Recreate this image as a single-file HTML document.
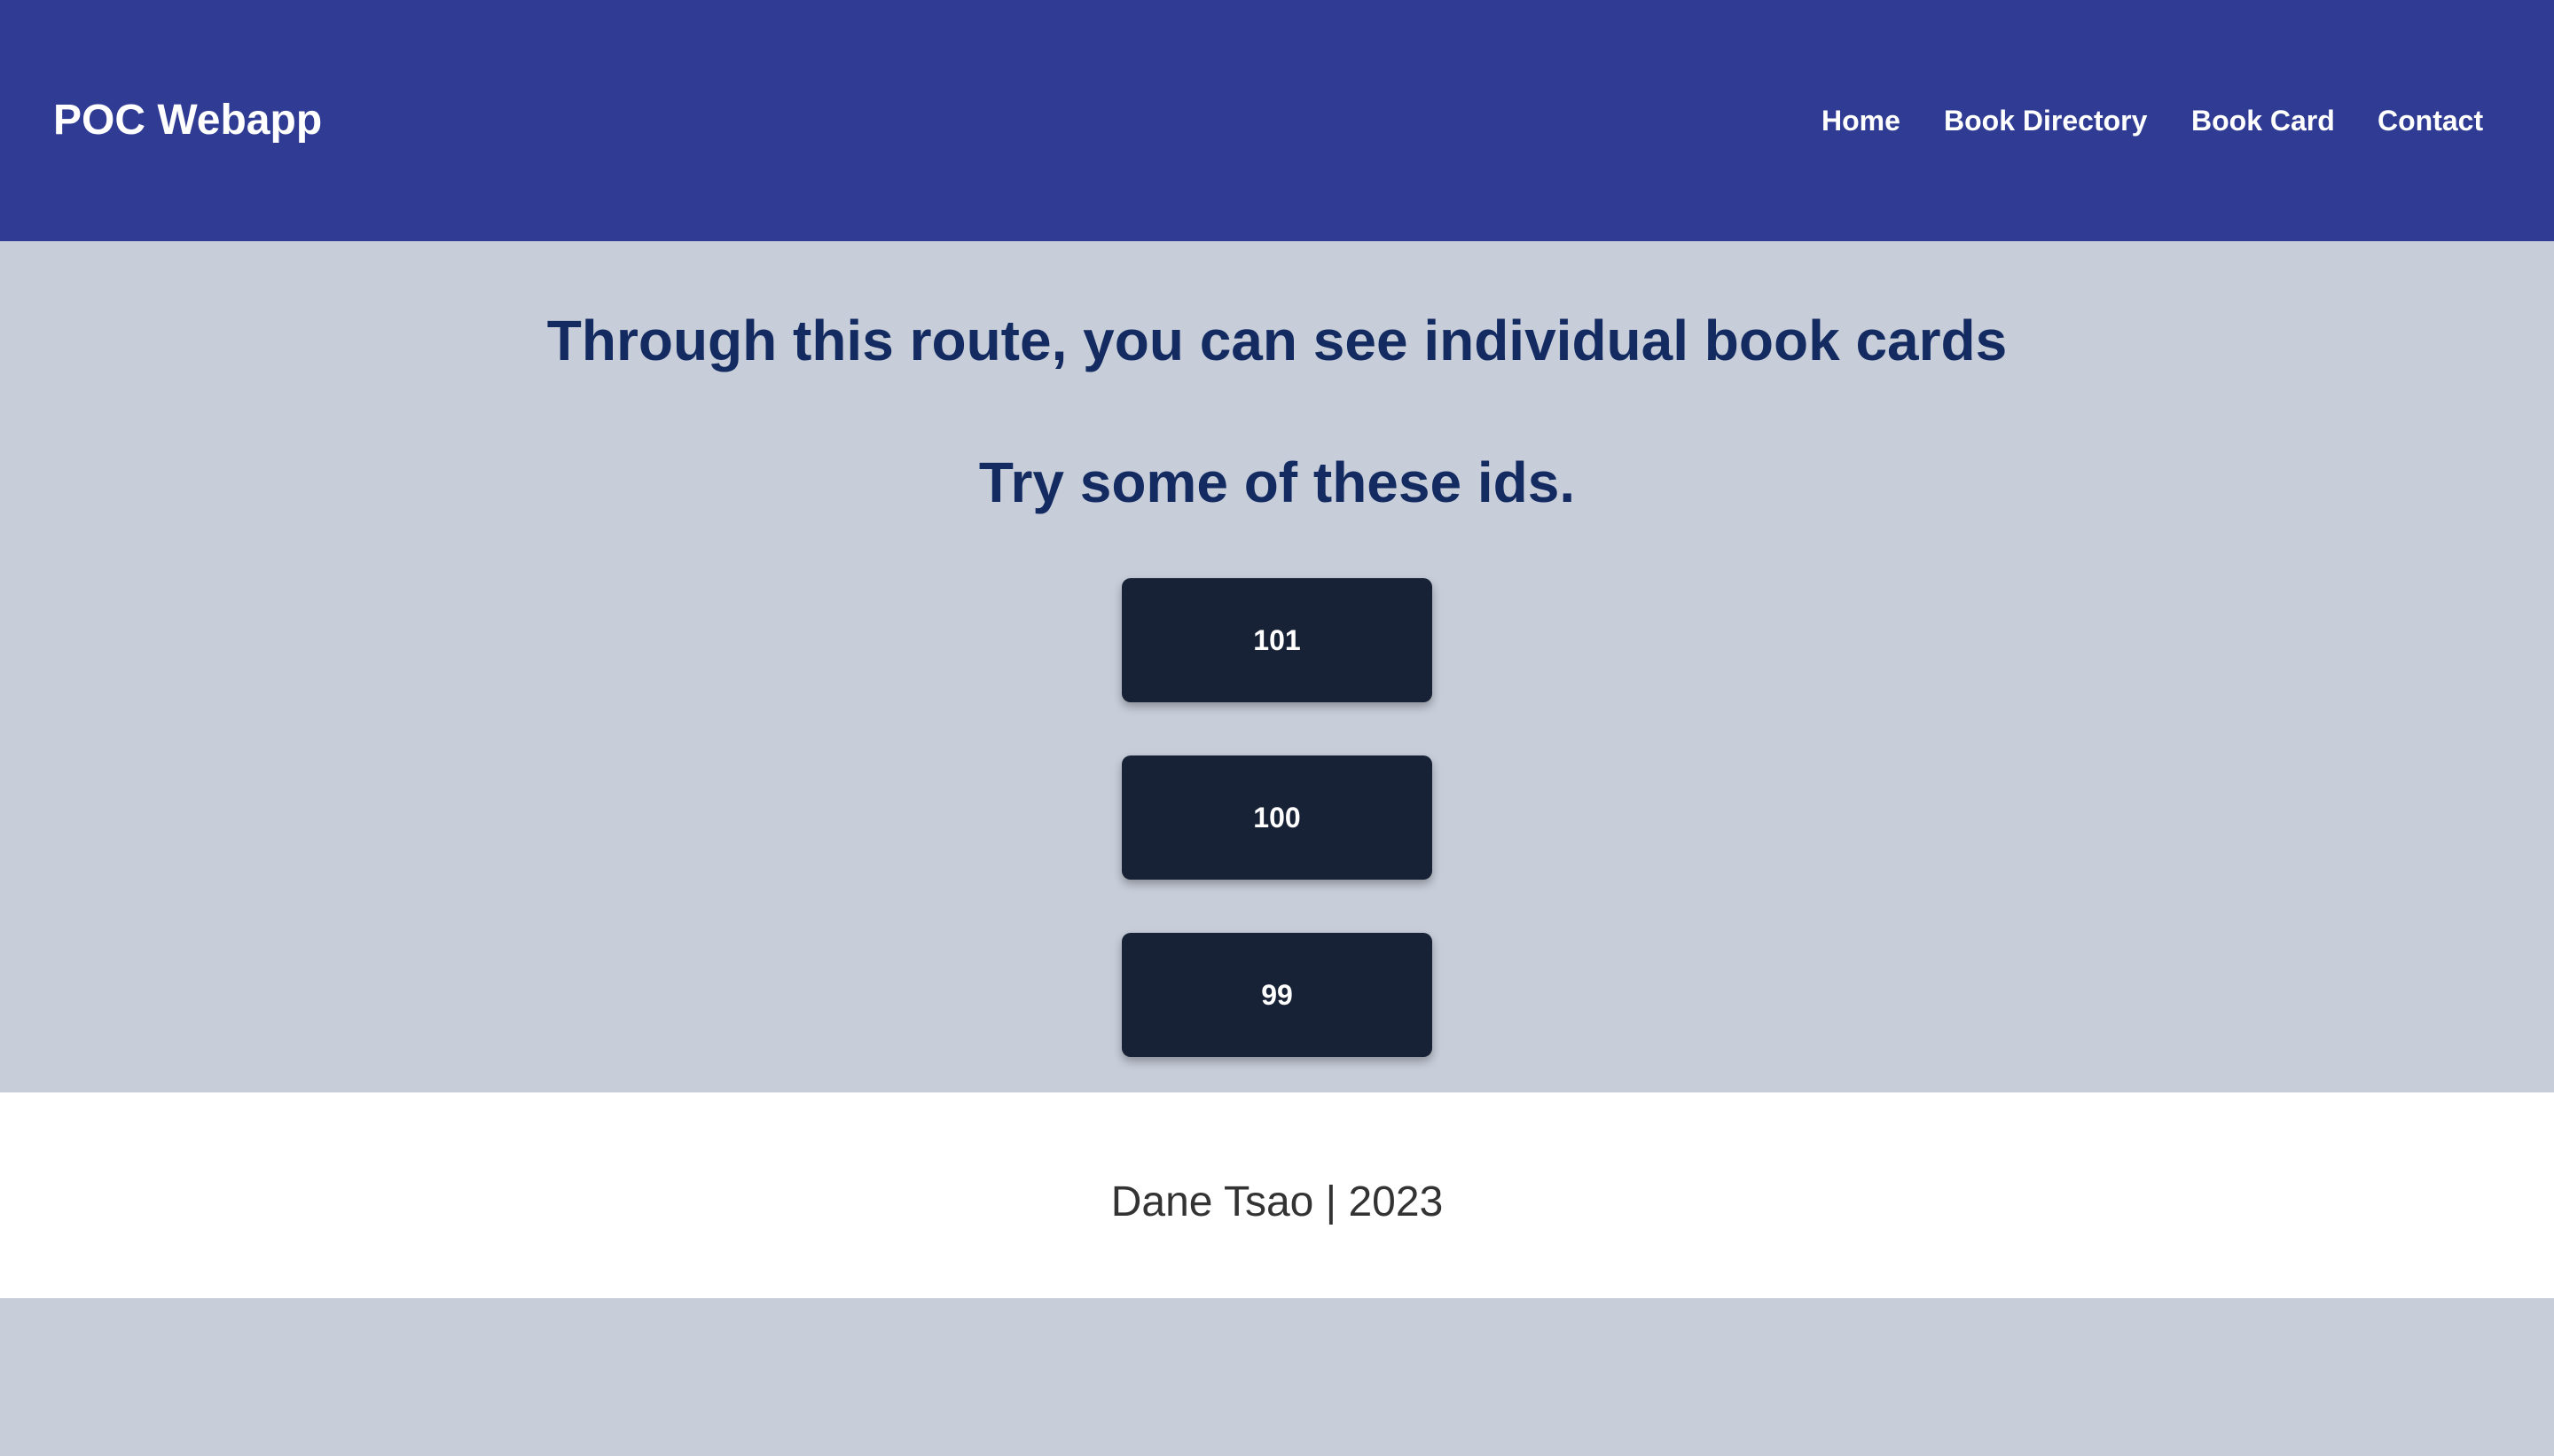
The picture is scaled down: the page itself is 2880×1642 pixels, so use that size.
<!DOCTYPE html>
<html><head><meta charset="utf-8"><style>
html,body{margin:0;padding:0;width:2880px;height:1642px;background:#c7cdd9;font-family:"Liberation Sans",Arial,sans-serif;overflow:hidden}
.hdr{position:absolute;left:0;top:0;width:2880px;height:272px;background:#303c94}
.logo{position:absolute;left:60px;top:106px;font-size:48px;font-weight:bold;color:#fff;line-height:60px}
.nav{position:absolute;top:116px;font-size:32px;font-weight:bold;color:#fff;line-height:40px;white-space:nowrap}
.h{position:absolute;left:0;width:2880px;text-align:center;font-weight:bold;color:#132b61;font-size:64px;line-height:80px}
.btn{position:absolute;left:1265px;width:350px;height:140px;background:#182236;border-radius:10px;box-shadow:0 5px 10px rgba(0,0,0,.3);color:#fff;font-weight:bold;font-size:32px;line-height:140px;text-align:center}
.ft{position:absolute;left:0;top:1232px;width:2880px;height:232px;background:#fff;text-align:center;font-size:48px;color:#333}
.ft span{position:absolute;left:0;width:2880px;top:98px;line-height:52px}
</style></head><body>
<div class="hdr">
<div class="logo">POC Webapp</div>
<div class="nav" style="left:2054px">Home</div>
<div class="nav" style="left:2192px">Book Directory</div>
<div class="nav" style="left:2471px">Book Card</div>
<div class="nav" style="left:2681px">Contact</div>
</div>
<div class="h" style="top:344px">Through this route, you can see individual book cards</div>
<div class="h" style="top:504px">Try some of these ids.</div>
<div class="btn" style="top:652px">101</div>
<div class="btn" style="top:852px">100</div>
<div class="btn" style="top:1052px">99</div>
<div class="ft"><span>Dane Tsao | 2023</span></div>
</body></html>
